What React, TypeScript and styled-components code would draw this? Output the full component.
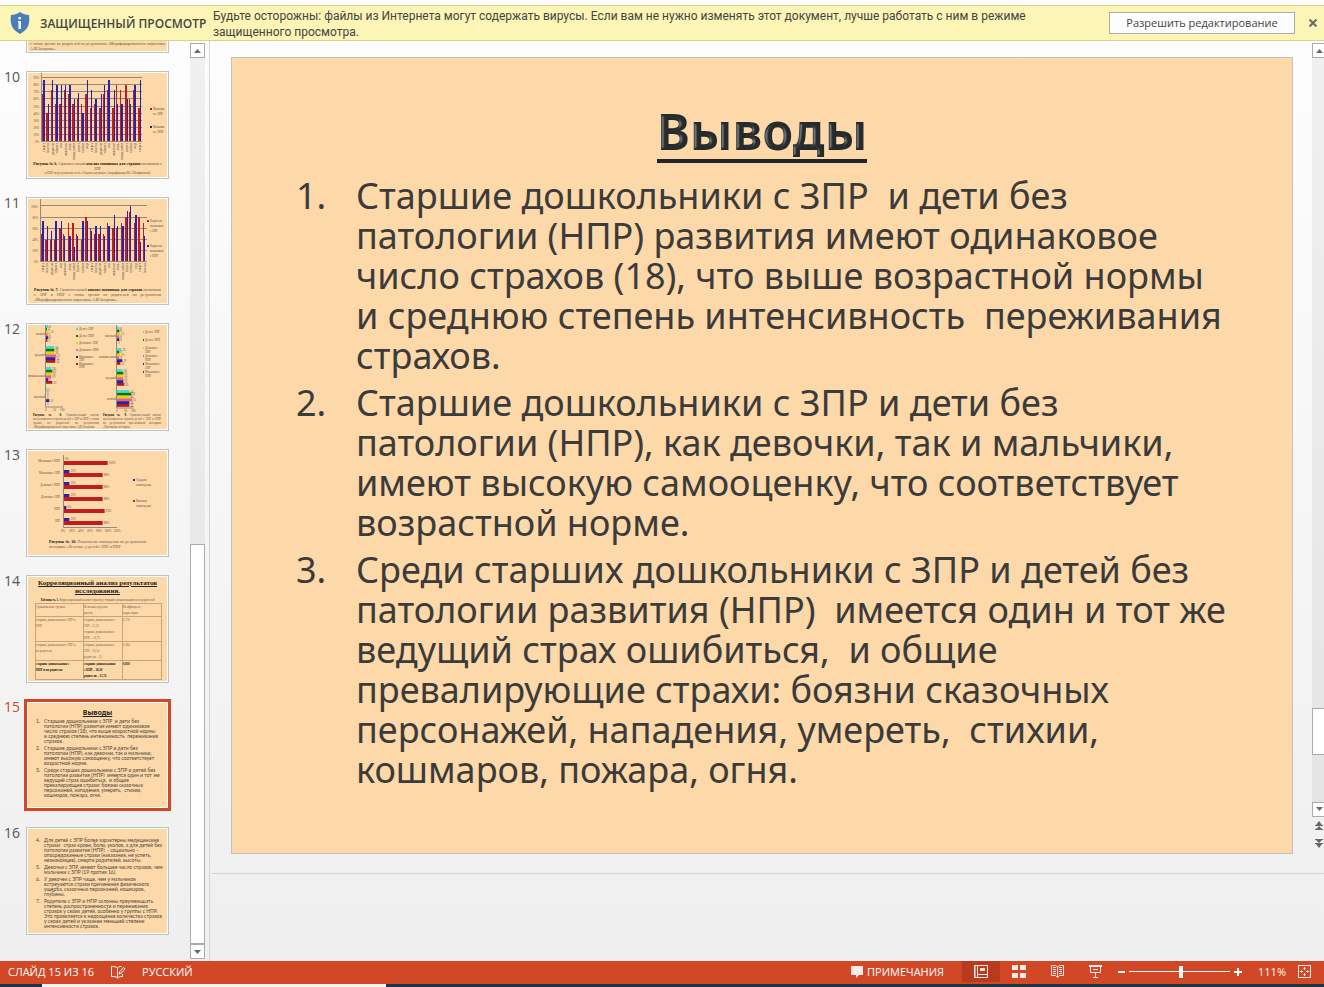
import React from "react";
import styled, { createGlobalStyle, css } from "styled-components";

const ACCENT = "#d24726";
const PEACH = "#fdd8a8";
const UI = `"Open Sans", "Noto Sans", sans-serif`;
const BODY = `"Noto Sans", "Open Sans", sans-serif`;
const SERIF = `"Liberation Serif", serif`;

const Global = createGlobalStyle`
  * { box-sizing: border-box; }
  html, body { margin: 0; height: 100%; }
  body { font-family: ${UI}; font-size: 12px; color: #444; overflow: hidden; }
  #root { height: 100%; }
  button { font: inherit; color: inherit; cursor: pointer; }
  p, ol, h1, h2 { margin: 0; padding: 0; }
`;

const Page = styled.div`
  display: flex;
  flex-direction: column;
  height: 100vh;
  background: #fdfdfd;
`;

/* ---------- protected view bar ---------- */

const MessageBar = styled.header`
  display: flex;
  align-items: center;
  flex: none;
  height: 36px;
  margin-top: 5px;
  padding: 0 4px 0 10px;
  background: #fcf5b5;
  border: solid #d8d488;
  border-width: 1px 0;
`;
const BarTitle = styled.strong`
  flex: none;
  width: 183px;
  padding-left: 10px;
  font-size: 12px;
  font-weight: 600;
  white-space: nowrap;
`;
const BarText = styled.p`
  flex: 1;
  min-width: 0;
  padding-top: 1px;
  font-family: Roboto, ${BODY};
  line-height: 16px;
  font-size: 12px;
  white-space: nowrap;
`;
const EnableButton = styled.button`
  flex: none;
  width: 186px;
  height: 22px;
  padding: 0;
  background: #fdfdfd;
  border: 1px solid #ababab;
  font-size: 11px;
  line-height: 20px;
`;
const CloseButton = styled.button`
  display: flex;
  padding: 4px 3px;
  margin-left: 11px;
  border: 0;
  background: none;
`;

/* ---------- panes ---------- */

const Workspace = styled.div`
  display: flex;
  flex: 1;
  min-height: 0;
  background: linear-gradient(#fdfdfd, #efefef);
`;
const Sidebar = styled.aside`
  display: flex;
  flex: none;
  width: 210px;
  padding: 2px 4px 2px 0;
  border-right: 1px solid #d4d4d4;
`;
const ThumbList = styled.ol`
  display: flex;
  flex-direction: column;
  justify-content: flex-end;
  gap: 18px;
  flex: 1;
  margin: -2px 0;
  padding: 0 0 26px;
  overflow: hidden;
  list-style: none;
`;
const ThumbRow = styled.li<{ $active?: boolean }>`
  display: flex;
  flex: none;
  color: ${(p) => (p.$active ? ACCENT : "#555")};
`;
const ThumbNumber = styled.span`
  width: 26px;
  padding-left: 4px;
  font-size: 14px;
  line-height: 12px;
`;
const ThumbFrame = styled.div<{ $active?: boolean }>`
  width: 143px;
  height: 108px;
  padding: 1px;
  background: #fff;
  border: 1px solid ${(p) => (p.$active ? ACCENT : "#c2c2c2")};
  ${(p) => p.$active && css`box-shadow: 0 0 0 2px ${ACCENT};`}
`;
const Mini = styled.div`
  display: flex;
  flex-direction: column;
  height: 104px;
  overflow: hidden;
  background: ${PEACH};
  color: #444;
  > svg { flex: none; }
`;
const Caption = styled.p<{ $side?: number; $justify?: boolean; $small?: boolean }>`
  flex: none;
  padding: 0 ${(p) => p.$side ?? 6}px;
  font-family: ${SERIF};
  font-size: ${(p) => (p.$small ? 3 : 4)}px;
  line-height: ${(p) => (p.$small ? 4 : 5)}px;
  text-align: ${(p) => (p.$justify ? "justify" : "center")};
  color: #665a4a;
  b { color: #111; }
`;
const CaptionPair = styled.div`
  display: grid;
  grid-template-columns: 66px 58px;
  gap: 4px;
  padding: 0 5px;
`;
const ChartText = styled.text<{ $size?: number }>`
  font-family: ${SERIF};
  font-size: ${(p) => p.$size ?? 3}px;
  fill: #5c5246;
`;
const MiniTitle = styled.h2<{ $sans?: boolean }>`
  font-family: ${(p) => (p.$sans ? BODY : SERIF)};
  font-size: 7px;
  line-height: 8px;
  text-align: center;
  text-decoration: underline;
  color: #222;
`;
const MiniTable = styled.table`
  width: 126px;
  margin: 1px auto 0 7px;
  border-collapse: collapse;
  table-layout: fixed;
  font-family: ${SERIF};
  font-size: 3px;
  line-height: 6px;
  color: #7a6450;
  td { border: 1px solid #c9a477; padding: 0; vertical-align: top; text-align: left; }
  tr:last-child td { color: #111; font-weight: 700; }
`;
const MiniOutline = styled.div`
  display: flex;
  flex-direction: column;
  gap: 2px;
  padding-left: 8px;
`;
const MiniItem = styled.div`
  display: flex;
  font-family: Lato, ${BODY};
  font-size: 5px;
  line-height: 5px;
  white-space: pre;
  color: #4c463d;
  > span { width: 8px; }
`;
const MiniSpacer = styled.div<{ $h: number }>`
  flex: none;
  height: ${(p) => p.$h}px;
`;

const ScrollColumn = styled.div<{ $width: number }>`
  display: flex;
  flex-direction: column;
  flex: none;
  width: ${(p) => p.$width}px;
  overflow: hidden;
`;
const ScrollArrow = styled.button`
  display: flex;
  align-items: center;
  justify-content: center;
  flex: none;
  width: 15px;
  height: 15px;
  padding: 0;
  background: #fff;
  border: 1px solid #ababab;
`;
const Track = styled.div`
  display: flex;
  flex-direction: column;
  flex: 1;
  width: 15px;
  background: rgba(0, 0, 0, 0.05);
`;
const TrackSpace = styled.div<{ $grow: number }>`
  flex: ${(p) => p.$grow} 0 0;
`;
const Grip = styled.div<{ $grow?: number }>`
  flex: ${(p) => (p.$grow ? `${p.$grow} 0 0` : "0 0 47px")};
  background: #fff;
  border: 1px solid #ababab;
`;
const JumpButton = styled.button`
  display: flex;
  flex: none;
  width: 15px;
  height: 18px;
  padding: 4px 3px;
  background: none;
  border: 0;
`;

const Main = styled.main`
  display: flex;
  flex-direction: column;
  flex: 1;
  min-width: 0;
  padding-left: 2px;
`;
const Stage = styled.div`
  display: flex;
  flex: none;
  padding-left: 19px;
  border-bottom: 1px solid #d4d4d4;
`;
const Slide = styled.section`
  flex: 1;
  aspect-ratio: 4 / 3;
  margin: 16px 19px 19px 0;
  padding: 46px 64px 0;
  background: ${PEACH};
  border: 1px solid #c2c2c2;
  overflow: hidden;
`;
const StageScroll = styled.div`
  display: flex;
  padding: 2px 0 20px;
`;
const SlideTitle = styled.h1`
  width: fit-content;
  margin: 0 auto 13px;
  border-bottom: 4px solid #222626;
  font-family: ${BODY};
  font-size: 50px;
  font-weight: 700;
  line-height: 55px;
  color: #262a2b;
  > span { filter: url(#bevel); }
`;
const Outline = styled.ol`
  display: flex;
  flex-direction: column;
  gap: 7px;
  list-style: none;
`;
const OutlineItem = styled.li`
  display: flex;
  font-family: ${BODY};
  font-size: 36px;
  line-height: 40px;
  white-space: pre;
  color: #3b3b3b;
  > span { width: 60px; }
`;
const Notes = styled.div`
  flex: 1;
`;

/* ---------- status bar ---------- */

const StatusBar = styled.footer`
  display: flex;
  align-items: center;
  flex: none;
  height: 23px;
  padding: 0 13px 2px 8px;
  background: ${ACCENT};
  color: #fff;
  font-size: 11px;
`;
const StatusButton = styled.button`
  display: flex;
  align-items: center;
  gap: 4px;
  padding: 0;
  border: 0;
  background: none;
  white-space: nowrap;
`;
const ViewButton = styled.button<{ $active?: boolean }>`
  display: flex;
  align-items: center;
  justify-content: center;
  width: 38px;
  height: 21px;
  padding: 0;
  border: 0;
  background: ${(p) => (p.$active ? "#b83b1d" : "none")};
`;
const Gap = styled.span<{ $w?: number }>`
  ${(p) => (p.$w ? css`width: ${p.$w}px;` : css`flex: 1;`)}
`;
const ZoomSlider = styled.input`
  appearance: none;
  width: 101px;
  height: 12px;
  margin: 0 4px;
  background: linear-gradient(#fff, #fff) center / 100% 1px no-repeat;
  &::-webkit-slider-thumb {
    appearance: none;
    width: 4px;
    height: 12px;
    background: #fff;
  }
`;
const Taskbar = styled.div`
  flex: none;
  height: 3px;
  background: linear-gradient(90deg, #1f3340 42px, #f4f4f4 42px, #f4f4f4 386px, #1f3340 386px);
`;

/* ---------- drawings ---------- */

const Shield = () => (
  <svg width="20" height="22" viewBox="0 0 20 22">
    <path d="M10 0C7.500 2 4 3 1 3C0 11 1 17 10 22C19 17 20 11 19 3C16 3 12.500 2 10 0Z" fill="#4a7ebb" />
    <path d="M8.500 5H11V7.200H8.500ZM8 9H11V17H8.500V10.300H8Z" fill="#fff" />
  </svg>
);
const Cross = () => (
  <svg width="8" height="8" viewBox="0 0 8 8" stroke="#6a6a6a" strokeWidth="2">
    <path d="M.5.5L7.500 7.500M7.500.5L.5 7.500" />
  </svg>
);
const Arrow = ({ down }: { down?: boolean }) => (
  <svg width="7" height="4" viewBox="0 0 7 4" fill="#6a6a6a">
    <path d={down ? "M0 0H7L3.500 4Z" : "M0 4H7L3.500 0Z"} />
  </svg>
);
const DoubleArrow = ({ down }: { down?: boolean }) => (
  <svg width="8" height="9" viewBox="0 0 8 9" fill="#666">
    <path d={down ? "M0 0H8V1H0ZM1 1H7L4 4ZM0 4H8V5H7L4 9L1 5H0Z" : "M0 4L1 4L4 0L7 4H8V5H0ZM1 8L4 5L7 8ZM0 8H8V9H0Z"} />
  </svg>
);
const Spelling = () => (
  <svg width="17" height="14" viewBox="0 0 17 14" fill="none" stroke="#fff">
    <path d="M7.500 3V12.500M7.500 3C6 1.500 3 1.500 1.500 1.500V11.500C4 11.500 6 11.500 7.500 13C8.500 12 10 11.500 12.500 11.500V9M7.500 3C8.500 1.800 10 1.500 11.500 1.500" />
    <path d="M9 9L10 6.500L13.500 2.500L15 4L11.500 8Z" />
  </svg>
);
const Comment = () => (
  <svg width="12" height="12" viewBox="0 0 12 12" fill="#fbeae6">
    <path d="M0 0H12V9H8L5 12V9H0Z" />
  </svg>
);
const NormalView = () => (
  <svg width="14" height="13" viewBox="0 0 14 13" fill="none" stroke="#fbeae6">
    <path d="M.5.5H13.500V12.500H.5ZM3.500.5V12.500M3.500 9.500H13.500M1 .5V12.500" />
    <path d="M6.500 3.500H10.500V5.500H6.500Z" fill="#fbeae6" />
  </svg>
);
const SorterView = () => (
  <svg width="14" height="13" viewBox="0 0 14 13" fill="#fbeae6">
    <path d="M0 0H6V5H0ZM8 0H14V5H8ZM0 8H6V13H0ZM8 8H14V13H8Z" />
  </svg>
);
const ReadingView = () => (
  <svg width="13" height="13" viewBox="0 0 13 13" fill="none" stroke="#fbeae6">
    <path d="M.5 .5H4.500L6.500 2L8.500 .5H12.500V10.500H8.500L6.500 12.500L4.500 10.500H.5ZM6.500 2V12M2 2.500H5M2 4.500H5M2 6.500H5M2 8.500H5M8 2.500H11M8 4.500H11M8 6.500H11M8 8.500H11" />
  </svg>
);
const ShowView = () => (
  <svg width="13" height="13" viewBox="0 0 13 13" fill="none" stroke="#fbeae6">
    <path d="M0 1H13" strokeWidth="2" />
    <path d="M1.500 2V7.500H11.500V2M4 4.500H9M6.500 8V12M4 12.500H9" />
  </svg>
);
const Fit = () => (
  <svg width="13" height="13" viewBox="0 0 13 13" fill="none" stroke="#fbeae6">
    <path d="M.5.5H12.500V12.500H.5Z" />
    <path d="M6.500 2V5M6.500 8V11M2 6.500H5M8 6.500H11M5.500 3.500H7.500M5.500 9.500H7.500M3.500 5.500V7.500M9.500 5.500V7.500" />
  </svg>
);
const Minus = () => <svg width="7" height="8" viewBox="0 0 7 8"><path d="M0 4H7" stroke="#fff" strokeWidth="2" /></svg>;
const Plus = () => <svg width="8" height="8" viewBox="0 0 8 8"><path d="M0 4H8M4 0V8" stroke="#fff" strokeWidth="2" /></svg>;

/* ---------- charts on the thumbnails ---------- */

const RED = "#c01e1e";
const BLUE = "#2a22a4";
const SIX = ["#40e0d0", "#0a7410", "#dcd800", "#e85f92", "#2a22a0", "#b01c1c"];
const FEARS = ["смерть", "болезнь", "родители", "темнота", "сны", "животные", "огонь", "пожар, война", "высота", "глубина", "вода"];

type ColumnProps = {
  pairs: number[][];
  left: number;
  right: number;
  base: number;
  unit: number;
  step: number;
  max: number;
  height: number;
  legend: { y: number; lines: string[] }[];
};
const ColumnChart = ({ pairs, left, right, base, unit, step, max, height, legend }: ColumnProps) => {
  const pitch = (right - left) / pairs.length;
  const ticks: number[] = [];
  for (let v = 0; v <= max; v += step) ticks.push(v);
  return (
    <svg width="139" height={height} viewBox={`0 0 139 ${height}`}>
      {ticks.map((v) => (
        <g key={v}>
          <rect x={left - 1} y={Math.round(base - v * unit)} width={right - left + 1} height="1" fill="#8d8a86" shapeRendering="crispEdges" />
          <ChartText x={left - 3} y={base - v * unit + 2} textAnchor="end">{v}%</ChartText>
        </g>
      ))}
      {pairs.map(([a, b], i) => {
        const x = Math.round(left + i * pitch);
        const redWidth = i % 3 === 1 ? 2 : 1;
        return (
          <g key={i}>
            <g shapeRendering="crispEdges">
              <rect x={x} y={base - a * unit} width={redWidth} height={a * unit} fill={RED} />
              <rect x={x + redWidth} y={base - b * unit} width={i % 3 === 0 ? 2 : 1} height={b * unit} fill={BLUE} />
            </g>
            <ChartText transform={`translate(${x + 3} ${base + 2}) rotate(-90)`} textAnchor="end">{FEARS[i % FEARS.length]}</ChartText>
          </g>
        );
      })}
      <rect x={Math.round(left) - 1} y="0" width="1" height={base} fill="#8d8a86" />
      {legend.map((l, i) => (
        <g key={i}>
          <rect x={right > 116 ? right : right + 8} y={l.y} width="2" height="2" fill={i ? BLUE : RED} />
          {l.lines.map((t, n) => (
            <ChartText key={n} x={right > 116 ? right + 3 : right + 11} y={l.y + 2 + n * 5}>{t}</ChartText>
          ))}
        </g>
      ))}
    </svg>
  );
};

const CHART_10 = [
  [66, 86], [40, 52], [72, 86], [52, 79], [52, 79], [72, 79], [66, 79], [52, 59], [59, 68], [52, 40], [66, 86], [47, 72],
  [52, 59], [47, 66], [66, 79], [72, 86], [47, 72], [79, 52], [72, 52], [79, 59], [59, 52], [72, 79], [47, 86],
];
const CHART_11 = [
  [49, 72], [38, 63], [38, 54], [38, 72], [60, 72], [49, 45], [69, 45], [69, 25], [49, 45], [38, 72], [80, 72], [60, 54],
  [49, 63], [49, 63], [49, 45], [69, 63], [60, 82], [60, 63], [69, 63], [80, 90], [89, 99], [69, 82], [80, 34], [69, 45],
];

const SixBars = ({ x, top, rows, labels, base }: { x: number; top: number; rows: number[][]; labels: string[]; base: number }) => (
  <g>
    {rows.map((row, r) => (
      <g key={r}>
        <ChartText x={x - 1} y={top + r * 21 + 10} textAnchor="end">{labels[r]}</ChartText>
        {row.map((w, i) => (
          <g key={i}>
            <rect x={x} y={top + r * 21 + i * 2.8} width={w / 3} height="2.8" fill={SIX[i]} />
            <ChartText x={x + w / 3 + 1} y={top + r * 21 + i * 2.8 + 2.500}>{Math.round(w * 1.200)}</ChartText>
          </g>
        ))}
      </g>
    ))}
    <path d={`M${x - 0.500} 0V${base}H${x + 17}`} fill="none" stroke="#8d8a86" />
    <ChartText x={x - 1} y={base + 4}>0</ChartText>
    <ChartText x={x + 7} y={base + 4}>50</ChartText>
    <ChartText x={x + 14} y={base + 4}>100</ChartText>
  </g>
);
const SIX_LABELS = [["Дети с ЗПР"], ["Дети с НПР"], ["Девочки с ЗПР"], ["Девочки с НПР"], ["Мальчики с", "ЗПР"], ["Мальчики с", "НПР"]];
const NARROW_LABELS = [["Дети с ЗПР"], ["Дети с НПР"], ["Девочки с", "ЗПР"], ["Девочки с", "НПР"], ["Мальчики с", "ЗПР"], ["Мальчики с", "НПР"]];
const Chart12 = () => (
  <svg width="139" height="88" viewBox="0 0 139 88">
    <SixBars x={18} top={0} base={82} labels={["низкий", "средний", "повышенный", "высокий"]}
      rows={[[7, 3, 10, 5, 7, 4], [25, 25, 25, 31, 28, 28], [16, 19, 16, 16, 7, 19], [4, 0, 0, 0, 10, 0]]} />
    <SixBars x={89} top={2} base={83} labels={["высокий", "повышенный", "средний", "низкий"]}
      rows={[[7, 7, 10, 7, 7, 0], [13, 7, 10, 7, 16, 10], [16, 19, 19, 19, 19, 22], [37, 43, 37, 46, 37, 37]]} />
    {SIX_LABELS.map((lines, i) => (
      <g key={i}>
        <rect x="48" y={3 + i * 7} width="2" height="2" fill={SIX[i]} />
        {lines.map((t, n) => <ChartText key={n} x="51" y={5 + i * 7 + n * 3}>{t}</ChartText>)}
      </g>
    ))}
    {NARROW_LABELS.map((lines, i) => (
      <g key={i}>
        <rect x="115" y={6 + i * 8} width="1" height="2" fill={SIX[i]} />
        {lines.map((t, n) => <ChartText key={n} x="117" y={8 + i * 8 + n * 4}>{t}</ChartText>)}
      </g>
    ))}
  </svg>
);

const ROWS_13: [string, number, number][] = [
  ["Мальчики с НПР", 0, 131], ["Мальчики с ЗПР", 16, 116], ["Девочки с НПР", 16, 116],
  ["Девочки с ЗПР", 16, 116], ["НПР", 7, 122], ["ЗПР", 16, 116],
];
const Chart13 = () => (
  <svg width="139" height="88" viewBox="0 0 139 88">
    {ROWS_13.map(([name, b, r], i) => (
      <g key={i}>
        <ChartText x="32" y={11 + i * 12} textAnchor="end">{name}</ChartText>
        <rect x="36" y={7 + i * 12} width={b / 3} height="3" fill={BLUE} />
        <rect x="36" y={10 + i * 12} width={r / 3} height="4" fill={RED} />
        <ChartText x={37 + b / 3} y={9 + i * 12}>{Math.round(b * 0.76)}%</ChartText>
        <ChartText x={37 + r / 3} y={13 + i * 12}>{Math.round(r * 0.76)}%</ChartText>
      </g>
    ))}
    <path d="M35.500 4V76.500H89" fill="none" stroke="#8d8a86" />
    {[0, 20, 40, 60, 80, 100, 120].map((v, i) => (
      <ChartText key={v} x={35 + i * 9} y="81" textAnchor="middle">{v}%</ChartText>
    ))}
    <rect x="105" y="28" width="2" height="2" fill={BLUE} />
    <ChartText x="108" y="30">Средняя</ChartText>
    <ChartText x="108" y="35">самооценка</ChartText>
    <rect x="105" y="49" width="2" height="2" fill={RED} />
    <ChartText x="108" y="51">Высокая</ChartText>
    <ChartText x="108" y="56">самооценка</ChartText>
  </svg>
);

/* ---------- slide text ---------- */

const ITEMS = [
  "Старшие дошкольники с ЗПР  и дети без\nпатологии (НПР) развития имеют одинаковое\nчисло страхов (18), что выше возрастной нормы\nи среднюю степень интенсивность  переживания\nстрахов.",
  "Старшие дошкольники с ЗПР и дети без\nпатологии (НПР), как девочки, так и мальчики,\nимеют высокую самооценку, что соответствует\nвозрастной норме.",
  "Среди старших дошкольники с ЗПР и детей без\nпатологии развития (НПР)  имеется один и тот же\nведущий страх ошибиться,  и общие\nпревалирующие страхи: боязни сказочных\nперсонажей, нападения, умереть,  стихии,\nкошмаров, пожара, огня.",
];
const NEXT_ITEMS = [
  "Для детей с ЗПР более характерны медицинские\nстрахи:  страх крови, боли, уколов, а для детей без\nпатологии развития (НПР)  - социально –\nопосредованные страхи (наказания, не успеть,\nнезнакомцев), смерти родителей, высоты.",
  "Девочки с ЗПР, имеют большее число страхов, чем\nмальчики с ЗПР (19 против 16).",
  "У девочек с ЗПР чаще, чем у мальчиков\nвстречаются страхи причинения физического\nущерба, сказочных персонажей, кошмаров,\nглубины.",
  "Родители с ЗПР и НПР склонны преуменьшать\nстепень распространенности и переживания\nстрахов у своих детей, особенно у группы с НПР.\nЭто проявляется в недооценке количества страхов\nу своих детей и указании меньшей степени\nинтенсивности страхов.",
];
const MiniText = ({ items, start }: { items: string[]; start: number }) => (
  <MiniOutline>
    {items.map((t, i) => (
      <MiniItem key={i}>
        <span>{start + i}.</span>
        <div>{t}</div>
      </MiniItem>
    ))}
  </MiniOutline>
);

const THUMBS: { n?: number; body: React.ReactNode }[] = [
  {
    body: (
      <>
        <MiniSpacer $h={94} />
        <Caption $side={2} $justify>с точки зрения их родителей по результатам «Модифицированного опросника А.И.Захарова».</Caption>
      </>
    ),
  },
  {
    n: 10,
    body: (
      <>
        <ColumnChart pairs={CHART_10} left={14} right={114} base={68} unit={0.71} step={10} max={90} height={88}
          legend={[{ y: 35, lines: ["Мальчик", "и с ЗПР"] }, { y: 53, lines: ["Мальчик", "и с НПР"] }]} />
        <Caption $side={4}><b>Рисунок № 6.</b> Сравнительный <b>анализ значимых для страхов</b> мальчиков с ЗПР</Caption>
        <Caption $side={2} $small>и НПР по результатам теста «Страхи в домиках» (модификация М.А.Панфиловой)</Caption>
      </>
    ),
  },
  {
    n: 11,
    body: (
      <>
        <ColumnChart pairs={CHART_11} left={13} right={119} base={62} unit={0.555} step={20} max={100} height={88}
          legend={[{ y: 21, lines: ["Родители", "мальчиков", "с ЗПР"] }, { y: 46, lines: ["Родители", "мальчиков", "с НПР"] }]} />
        <Caption $side={6} $justify><b>Рисунок № 7.</b> Сравнительный <b>анализ значимых для страхов</b> мальчиков с ЗПР и НПР с точки зрения их родителей по результатам «Модифицированного опросника А.И.Захарова».</Caption>
      </>
    ),
  },
  {
    n: 12,
    body: (
      <>
        <Chart12 />
        <CaptionPair>
          <Caption $side={0} $justify $small><b>Рисунок № 8.</b> Сравнительный анализ интенсивности страхов детей с ЗПР и НПР с точки зрения их родителей по результатам «Модифицированного опросника А.И.Захарова»</Caption>
          <Caption $side={0} $justify $small><b>Рисунок № 9.</b> Сравнительный анализ интенсивности страхов детей с ЗПР и НПР по результатам проективной методики «Рисование истории»</Caption>
        </CaptionPair>
      </>
    ),
  },
  {
    n: 13,
    body: (
      <>
        <Chart13 />
        <Caption $side={21} $justify><b>Рисунок № 10.</b> Показатели самооценки по результатам методики «Лесенка» у детей с ЗПР и НПР</Caption>
      </>
    ),
  },
  {
    n: 14,
    body: (
      <>
        <MiniSpacer $h={2} />
        <MiniTitle>Корреляционный анализ результатов исследования.</MiniTitle>
        <MiniSpacer $h={3} />
        <Caption $side={2} $small><b>Таблица № 1.</b> Корреляционный анализ страхов у старших дошкольников и их родителей</Caption>
        <MiniTable>
          <colgroup><col width="48" /><col width="39" /><col width="39" /></colgroup>
          <tbody>
            <tr><td>Сравниваемые группы</td><td>Величина средних<br />рангов</td><td>Коэффициент<br />корреляции</td></tr>
            <tr><td>старшие дошкольники с ЗПР и<br />НПР</td><td>старшие дошкольники с<br />ЗПР – 11,25<br />старшие дошкольники с<br />НПР – 10,75</td><td>0,710</td></tr>
            <tr><td>старшие дошкольники с ЗПР и<br />их родители</td><td>старшие дошкольники с<br />ЗПР – 18,14<br />родители – 15</td><td>0,384</td></tr>
            <tr><td>старшие дошкольники с<br />НПР и их родители</td><td>старшие дошкольники<br />с НПР – 18,28<br />родители – 15,74</td><td>0,818</td></tr>
          </tbody>
        </MiniTable>
      </>
    ),
  },
  {
    n: 15,
    body: (
      <>
        <MiniSpacer $h={6} />
        <MiniTitle $sans>Выводы</MiniTitle>
        <MiniSpacer $h={2} />
        <MiniText items={ITEMS} start={1} />
      </>
    ),
  },
  {
    n: 16,
    body: (
      <>
        <MiniSpacer $h={9} />
        <MiniText items={NEXT_ITEMS} start={4} />
      </>
    ),
  },
];

const FilterDefs = styled.svg`
  position: absolute;
`;

export default function App() {
  return (
    <Page>
      <Global />
      <FilterDefs width="0" height="0" aria-hidden>
        <filter id="bevel" x="-5%" y="-10%" width="110%" height="120%">
          <feGaussianBlur in="SourceAlpha" stdDeviation="1.500" result="soft" />
          <feSpecularLighting in="soft" surfaceScale="2" specularConstant="0.500" specularExponent="30" lightingColor="#a8b2b6" result="shine">
            <feDistantLight azimuth="180" elevation="35" />
          </feSpecularLighting>
          <feComposite in="shine" in2="SourceAlpha" operator="in" result="inner" />
          <feComposite in="SourceGraphic" in2="inner" operator="arithmetic" k1="0" k2="1" k3="0.700" k4="0" />
        </filter>
      </FilterDefs>
      <MessageBar>
        <Shield />
        <BarTitle>ЗАЩИЩЕННЫЙ ПРОСМОТР</BarTitle>
        <BarText>
          Будьте осторожны: файлы из Интернета могут содержать вирусы. Если вам не нужно изменять этот документ, лучше работать с ним в режиме
          <br />
          защищенного просмотра.
        </BarText>
        <EnableButton>Разрешить редактирование</EnableButton>
        <CloseButton aria-label="Закрыть"><Cross /></CloseButton>
      </MessageBar>

      <Workspace>
        <Sidebar>
          <ThumbList>
            {THUMBS.map((t, i) => (
              <ThumbRow key={i} $active={t.n === 15}>
                <ThumbNumber>{t.n}</ThumbNumber>
                <ThumbFrame $active={t.n === 15}>
                  <Mini>{t.body}</Mini>
                </ThumbFrame>
              </ThumbRow>
            ))}
          </ThumbList>
          <ScrollColumn $width={15}>
            <ScrollArrow aria-label="Вверх"><Arrow /></ScrollArrow>
            <Track>
              <TrackSpace $grow={11} />
              <Grip $grow={9} />
            </Track>
            <ScrollArrow aria-label="Вниз"><Arrow down /></ScrollArrow>
          </ScrollColumn>
        </Sidebar>

        <Main>
          <Stage>
            <Slide>
              <SlideTitle><span>Выводы</span></SlideTitle>
              <Outline>
                {ITEMS.map((t, i) => (
                  <OutlineItem key={i}>
                    <span>{i + 1}.</span>
                    <div>{t}</div>
                  </OutlineItem>
                ))}
              </Outline>
            </Slide>
            <StageScroll>
              <ScrollColumn $width={12}>
                <ScrollArrow aria-label="Вверх"><Arrow /></ScrollArrow>
                <Track>
                  <TrackSpace $grow={14} />
                  <Grip />
                  <TrackSpace $grow={1} />
                </Track>
                <ScrollArrow aria-label="Вниз"><Arrow down /></ScrollArrow>
                <JumpButton aria-label="Предыдущий слайд"><DoubleArrow /></JumpButton>
                <JumpButton aria-label="Следующий слайд"><DoubleArrow down /></JumpButton>
              </ScrollColumn>
            </StageScroll>
          </Stage>
          <Notes />
        </Main>
      </Workspace>

      <StatusBar>
        <span>СЛАЙД 15 ИЗ 16</span>
        <Gap $w={16} />
        <StatusButton aria-label="Правописание"><Spelling /></StatusButton>
        <Gap $w={15} />
        <StatusButton>РУССКИЙ</StatusButton>
        <Gap />
        <StatusButton><Comment />ПРИМЕЧАНИЯ</StatusButton>
        <Gap $w={18} />
        <ViewButton $active aria-label="Обычный"><NormalView /></ViewButton>
        <ViewButton aria-label="Сортировщик"><SorterView /></ViewButton>
        <ViewButton aria-label="Чтение"><ReadingView /></ViewButton>
        <ViewButton aria-label="Показ слайдов"><ShowView /></ViewButton>
        <Gap $w={4} />
        <StatusButton aria-label="Уменьшить"><Minus /></StatusButton>
        <ZoomSlider type="range" aria-label="Масштаб" min={0} max={100} defaultValue={52} />
        <StatusButton aria-label="Увеличить"><Plus /></StatusButton>
        <Gap $w={16} />
        <StatusButton>111%</StatusButton>
        <Gap $w={12} />
        <StatusButton aria-label="Вписать"><Fit /></StatusButton>
      </StatusBar>
      <Taskbar />
    </Page>
  );
}
